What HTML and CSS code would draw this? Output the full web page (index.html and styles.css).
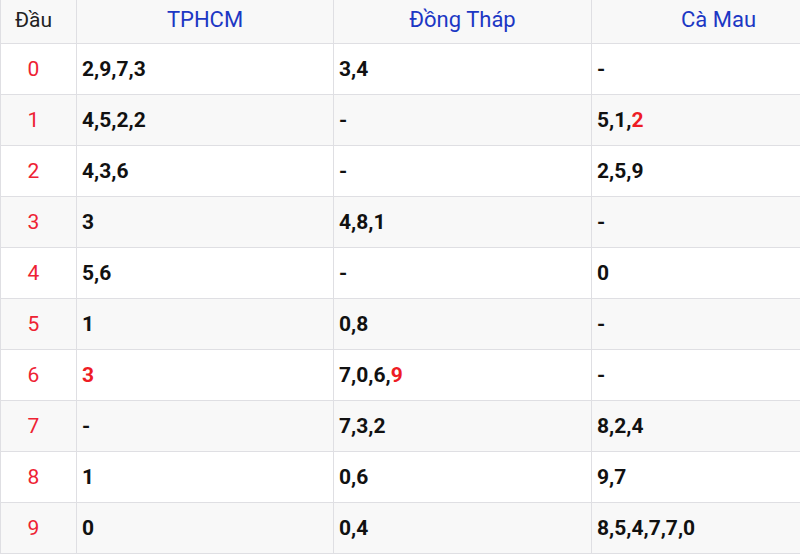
FILE: index.html
```html
<!DOCTYPE html>
<html lang="vi">
<head>
<meta charset="utf-8">
<link rel="stylesheet" href="styles.css">
</head>
<body>
<div class="frame">
<table class="loto">
  <thead>
    <tr><th class="dau">Đầu</th><th>TPHCM</th><th>Đồng Tháp</th><th>Cà Mau</th></tr>
  </thead>
  <tbody>
    <tr><td class="head">0</td><td>2,9,7,3</td><td>3,4</td><td>-</td></tr>
    <tr><td class="head">1</td><td>4,5,2,2</td><td>-</td><td>5,1,<span class="hot">2</span></td></tr>
    <tr><td class="head">2</td><td>4,3,6</td><td>-</td><td>2,5,9</td></tr>
    <tr><td class="head">3</td><td>3</td><td>4,8,1</td><td>-</td></tr>
    <tr><td class="head">4</td><td>5,6</td><td>-</td><td>0</td></tr>
    <tr><td class="head">5</td><td>1</td><td>0,8</td><td>-</td></tr>
    <tr><td class="head">6</td><td><span class="hot">3</span></td><td>7,0,6,<span class="hot">9</span></td><td>-</td></tr>
    <tr><td class="head">7</td><td>-</td><td>7,3,2</td><td>8,2,4</td></tr>
    <tr><td class="head">8</td><td>1</td><td>0,6</td><td>9,7</td></tr>
    <tr><td class="head">9</td><td>0</td><td>0,4</td><td>8,5,4,7,7,0</td></tr>
  </tbody>
</table>
</div>
</body>
</html>
```

FILE: styles.css
```css
html, body {
  margin: 0;
  padding: 0;
  background: #fff;
}
body {
  font-family: Roboto, "Liberation Sans", Arial, sans-serif;
}
.frame {
  width: 800px;
  height: 556px;
  overflow: hidden;
}
.loto {
  border-collapse: collapse;
  width: 846px;
  table-layout: fixed;
  margin-top: -1px;
}
.loto th, .loto td {
  border: 1px solid #dfdfe3;
  line-height: 24px;
  box-sizing: border-box;
}
.loto th {
  height: 44px;
  font-size: 22px;
  font-weight: 400;
  color: #1c37c4;
  background: #f8f8f8;
  text-align: center;
  padding: 0 0 4px;
}
.loto th.dau {
  width: 76px;
  font-size: 21px;
  color: #222;
  padding-right: 10px;
}
.loto th:nth-child(2) { width: 257px; }
.loto th:nth-child(3) { width: 258px; }
.loto td {
  height: 51px;
  font-size: 21px;
  font-weight: 700;
  color: #111;
  padding: 0 5px;
  text-align: left;
}
.loto td.head {
  font-weight: 400;
  color: #ee2233;
  text-align: center;
  padding: 0 10px 0 0;
}
.loto tbody tr:nth-child(even) td {
  background: #f8f8f8;
}
.hot {
  color: #ee1c25;
}
```
